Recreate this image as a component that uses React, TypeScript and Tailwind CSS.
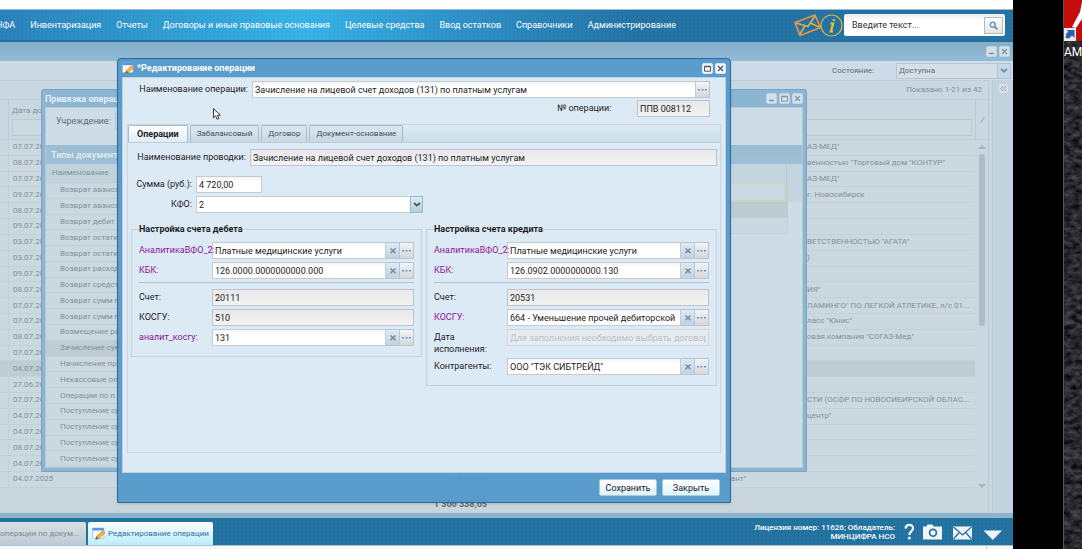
import type { ReactNode } from "react";
import { clsx } from "clsx";

const menu = [
  "НФА",
  "Инвентаризация",
  "Отчеты",
  "Договоры и иные правовые основания",
  "Целевые средства",
  "Ввод остатков",
  "Справочники",
  "Администрирование",
];

type Row = { date: string; text?: string; wide?: boolean; sum?: string; active?: boolean };

const rows: Row[] = [
  { date: "07.07.2025", text: 'АЗ-МЕД"' },
  { date: "08.07.2025", text: 'венностью "Торговый дом "КОНТУР"' },
  { date: "07.07.2025", text: 'АЗ-МЕД"' },
  { date: "09.07.2025", text: "г. Новосибирск" },
  { date: "08.07.2025" },
  { date: "09.07.2025" },
  { date: "03.07.2025", text: 'ВЕТСТВЕННОСТЬЮ "АГАТА"' },
  { date: "03.07.2025", text: ")" },
  { date: "09.07.2025" },
  { date: "08.07.2025", text: 'ИЯ"' },
  { date: "07.07.2025", text: 'ЛАМИНГО" ПО ЛЕГКОЙ АТЛЕТИКЕ, л/с 01...' },
  { date: "07.07.2025", text: 'ласс "Юнис"' },
  { date: "08.07.2025", text: 'овая компания "СОГАЗ-Мед"' },
  { date: "07.07.2025" },
  { date: "04.07.2025", active: true },
  { date: "27.06.2025" },
  { date: "07.07.2025", text: "СТИ (ОСФР ПО НОВОСИБИРСКОЙ ОБЛАС..." },
  { date: "04.07.2025", text: 'центр"' },
  { date: "04.07.2025" },
  { date: "08.07.2025" },
  { date: "04.07.2025" },
  { date: "04.07.2025", text: 'арант"', wide: true, sum: "10 500,00" },
];

const documentTypes = [
  "Возврат аванса",
  "Возврат аванса",
  "Возврат дебит",
  "Возврат остатк",
  "Возврат остатк",
  "Возврат расход",
  "Возврат средст",
  "Возврат сумм п",
  "Возврат сумм п",
  "Возмещение ра",
  "Зачисление сум",
  "Начисление пр",
  "Некассовые оп",
  "Операции по п",
  "Поступление ср",
  "Поступление ср",
  "Поступление ср",
  "Поступление су",
];

function EditIcon({ className }: { className?: string }) {
  return (
    <svg viewBox="0 0 12 12" className={clsx("shrink-0", className)} aria-hidden="true">
      <rect x="0.5" y="1" width="10.5" height="9.5" rx="0.8" fill="#f6faff" stroke="#9dbce0" strokeWidth="0.7" />
      <rect x="0.5" y="1" width="10.5" height="2.2" fill="#5b93da" />
      <path d="M3.4 11.4 4.2 8.6 9.4 3.8 11.6 5.9 6.2 10.8Z" fill="#f3b73c" stroke="#b98331" strokeWidth="0.5" />
      <path d="M3.4 11.4 4.2 8.6 6.2 10.8Z" fill="#7b5b3b" />
      <path d="m9.4 3.8 2.2 2.1.5-.6c.2-.9-1.2-2.2-2.1-2.1z" fill="#ee8a6d" />
    </svg>
  );
}

function ToolButton({ kind, faded }: { kind: "min" | "max" | "close" | "collapse"; faded?: boolean }) {
  return (
    <button
      type="button"
      aria-label={kind}
      className={clsx(
        "grid size-[11px] shrink-0 place-items-center rounded-[2px] border",
        faded ? "border-[#c4d3dd] bg-[#d5e0e8] text-[#8496a3]" : "border-[#d9e3ea] bg-[#f4f6f8] text-[#4b5a66]",
      )}
    >
      <svg viewBox="0 0 9 9" className="size-[9px]" fill="none" stroke="currentColor" aria-hidden="true">
        {kind === "min" && <path d="M2 6.5h5" strokeWidth="1.5" />}
        {kind === "max" && <path d="M1.5 2.2h6v5h-6zM1.5 2.8h6" strokeWidth="1" />}
        {kind === "close" && <path d="m2 2 5 5m0-5L2 7" strokeWidth="1.3" />}
        {kind === "collapse" && <path d="M4 2 1.8 4.5 4 7m3-5L4.8 4.5 7 7" strokeWidth="0.8" />}
      </svg>
    </button>
  );
}

function Trigger({ kind, label }: { kind: "clear" | "more"; label: string }) {
  return (
    <button
      type="button"
      aria-label={label}
      className={clsx(
        "grid w-[14px] shrink-0 place-items-center border border-l-0 border-[#b9c5d0]",
        kind === "clear" ? "bg-linear-to-b from-[#dcebf5] to-[#bfd3e2]" : "bg-linear-to-b from-[#f2f4f5] to-[#d4d8db]",
      )}
    >
      {kind === "clear" ? (
        <svg viewBox="0 0 8 8" className="size-2" stroke="#7b8d9b" strokeWidth="1.5" aria-hidden="true">
          <path d="m1.5 1.5 5 4.6m0-4.6-5 4.6" />
        </svg>
      ) : (
        <svg viewBox="0 0 9 3" className="h-[3px] w-[9px]" fill="#6f97bd" aria-hidden="true">
          <path d="M0 1h2v1.500H0zM3.500 1h2v1.500h-2zM7 1h2v1.500H7z" />
        </svg>
      )}
    </button>
  );
}

type FieldProps = {
  id: string;
  label: ReactNode;
  value?: string;
  placeholder?: string;
  labelClass?: string;
  boxClass?: string;
  readOnly?: boolean;
  disabled?: boolean;
  clear?: boolean;
  more?: boolean;
};

function Field({ id, label, value, placeholder, labelClass, boxClass, readOnly, disabled, clear, more }: FieldProps) {
  return (
    <div className="flex items-start">
      <label htmlFor={id} className={clsx("relative z-10 shrink-0 pt-[2px] leading-[12px] whitespace-nowrap", labelClass)}>
        {label}
      </label>
      <div className={clsx("flex h-[17px]", boxClass)}>
        <input
          id={id}
          defaultValue={value}
          placeholder={placeholder}
          readOnly={readOnly}
          disabled={disabled}
          className={clsx(
            "w-full min-w-0 flex-1 border px-[2px]",
            readOnly && "border-[#bfc3d0] bg-linear-to-b from-[#e8e8e8] to-[#f3f3f3]",
            disabled && "border-[#d0d6dc] bg-[#e7ecf0] placeholder:text-[#b9bfc5]",
            !readOnly && !disabled && "border-[#c3cbd3] bg-linear-to-b from-[#f4f4f4] to-white to-30%",
          )}
        />
        {clear && <Trigger kind="clear" label="Очистить" />}
        {more && <Trigger kind="more" label="Выбрать" />}
      </div>
    </div>
  );
}

function Header() {
  return (
    <header className="flex h-[33px] shrink-0 items-center border-t border-[#9db9cb] border-b-2 border-b-[#2a6f9b] bg-[radial-gradient(#0000000d_1px,transparent_1px),linear-gradient(90deg,#2a83bb_0%,#37b4e9_30%,#2f93cb_45%,#2474a6_63%)] bg-size-[4px_4px,100%_100%] pr-2 text-white">
      <nav className="flex flex-1 items-center gap-[15px] overflow-hidden whitespace-nowrap">
        {menu.map((item) => (
          <a key={item} href="#" className="first:-ml-1">
            {item}
          </a>
        ))}
      </nav>
      <svg viewBox="0 0 50 24" className="h-[24px] w-[50px] shrink-0" fill="none" aria-hidden="true">
        <g stroke="#e8924a" strokeWidth="1.7" strokeLinejoin="round">
          <path d="M1 9.500 21 2l5.500 12.500L6 22.500Z" />
          <path d="m2 10 12 3.500L21 3M6 21l5-8.400M25 14l-8-3.800" stroke="#dcae45" />
        </g>
        <circle cx="37.500" cy="12.500" r="10.500" stroke="#d9b23f" strokeWidth="1.2" />
        <path d="M36.500 10.500h2.600l-2.200 7.800h2M39.900 6.200v1.900" stroke="#ecc52e" strokeWidth="2.2" />
      </svg>
      <div className="flex h-[22px] w-[161px] shrink-0 items-center rounded-[2px] bg-linear-to-b from-[#ececec] to-white to-30% pr-[2px] pl-2">
        <input
          aria-label="Поиск"
          placeholder="Введите текст..."
          className="min-w-0 flex-1 text-[#333] outline-none placeholder:text-[#333]"
        />
        <button
          type="button"
          aria-label="Найти"
          className="grid h-[17px] w-[19px] place-items-center border border-[#b5b9bc] bg-linear-to-b from-white to-[#e3e3e3]"
        >
          <svg viewBox="0 0 9 9" className="size-[9px]" fill="none" stroke="#4d8fc0" aria-hidden="true">
            <circle cx="3.7" cy="3.7" r="2.5" strokeWidth="1.3" />
            <path d="m5.6 5.6 2.8 2.8" strokeWidth="1.7" />
          </svg>
        </button>
      </div>
    </header>
  );
}

function RegistryWindow() {
  return (
    <section className="flex min-h-0 flex-1 flex-col bg-[#c8d7e0] text-[8px] text-[#83919b]">
      <div className="flex h-[19px] shrink-0 items-center justify-end gap-[2px] bg-linear-to-b from-[#84afcb] to-[#92bbd7] pr-[3px]">
        <ToolButton kind="min" faded />
        <ToolButton kind="close" faded />
      </div>
      <div className="flex h-[19px] shrink-0 items-center justify-end bg-linear-to-r from-[#cbdae3] to-[#cddce9] pr-[2px] text-[#5d6b76]">
        <label htmlFor="state" className="w-[64px]">
          Состояние:
        </label>
        <div className="relative h-[16px] w-[115px]">
          <select id="state" className="h-full w-full appearance-none border border-[#b5c5d1] bg-[#d3dee6] px-[2px]">
            <option>Доступна</option>
          </select>
          <span className="pointer-events-none absolute inset-y-0 right-0 grid w-[14px] place-items-center border border-[#b0c5d4] bg-[#c4d8e6]">
            <svg viewBox="0 0 8 5" className="h-[5px] w-2" fill="none" stroke="#73889a" strokeWidth="1.8" aria-hidden="true">
              <path d="m1 1 3 2.6L7 1" />
            </svg>
          </span>
        </div>
      </div>
      <div className="flex min-h-0 flex-1">
        <div className="flex min-w-0 flex-1 flex-col border-r border-[#bccbd5]">
          <div className="flex h-[20px] shrink-0 items-center justify-end border-y border-[#bfced7] pr-[6px]">
            Показано 1-21 из 42
          </div>
          <div className="flex h-[40px] shrink-0 border-b border-[#bfcdd6]">
            <div className="w-[9px] border-r border-[#bccad3]" />
            <div className="flex flex-1 flex-col border-r border-[#bccad3] px-[3px] pt-[5px]">
              <span>Дата до</span>
              <span className="mt-[2px] h-[17px] border border-[#bac8d1] bg-[#cddae2]" />
            </div>
            <span className="w-[12px] pt-[14px] pl-[5px] italic">/</span>
          </div>
          <div className="flex min-h-0 flex-1">
            <div className="flex min-w-0 flex-1 flex-col bg-[#cbd8e0]">
              {rows.map((row, index) => (
                <div
                  key={index}
                  className={clsx(
                    "flex min-h-0 flex-1 items-center border-b border-[#c2d0d8] whitespace-nowrap",
                    row.active && "bg-[#bfccd4]",
                  )}
                >
                  <span className="h-full w-[9px] shrink-0 border-r border-[#c2d0d8]" />
                  <span className="w-[60px] shrink-0 pl-[4px]">{row.date}</span>
                  <span className="w-[419px] shrink-0 text-right">{row.sum}</span>
                  <span className={clsx("shrink-0", row.wide ? "pl-[234px]" : "pl-[319px]")}>{row.text}</span>
                </div>
              ))}
            </div>
            <div className="flex w-[13px] flex-col items-center pt-[5px]">
              <svg viewBox="0 0 8 4" className="h-1 w-2 shrink-0" fill="#a5b4be" aria-hidden="true">
                <path d="M0 4 4 0l4 4z" />
              </svg>
              <div className="mt-[5px] h-1/2 w-[6px] rounded-full bg-[#aebcc6]" />
              <svg viewBox="0 0 8 4" className="mt-auto h-1 w-2 shrink-0" fill="#a5b4be" aria-hidden="true">
                <path d="m0 0 4 4 4-4z" />
              </svg>
            </div>
          </div>
          <div className="flex h-[25px] shrink-0 items-end bg-[#c8d5dd] pb-[3px]">
            <strong className="w-[487px] text-right text-[9px] leading-[12px] text-[#5f6e79]">1 366 338,65</strong>
          </div>
        </div>
        <div className="ml-[3px] flex w-[21px] justify-center border-l border-[#bccbd5] bg-[#c2d3de] pt-[3px]">
          <ToolButton kind="collapse" faded />
        </div>
      </div>
    </section>
  );
}

function BindingWindow() {
  return (
    <section className="absolute top-[47px] right-[206px] bottom-[41px] left-[41px] flex flex-col rounded-t-[3px] border border-[#76a6c7] bg-[#8bb6d3] p-[3px] pt-0 text-[#83919b]">
      <div className="flex h-[17px] shrink-0 items-center gap-[2px] text-[#e6eff5]">
        <strong className="flex-1">Привязка операции</strong>
        <ToolButton kind="min" faded />
        <ToolButton kind="max" faded />
        <ToolButton kind="close" faded />
      </div>
      <div className="flex min-h-0 flex-1 flex-col border border-[#b9c8d3] bg-[#cedce7]">
        <div className="flex h-[37px] shrink-0 items-start pt-[5px] pl-[10px] text-[#5d6b76]">
          <label htmlFor="org" className="w-[59px] pt-[2px]">
            Учреждение:
          </label>
          <input id="org" className="h-[17px] w-[400px] border border-[#bccad4] bg-[#d4dfe6]" />
        </div>
        <h2 className="flex h-[19px] shrink-0 items-center bg-linear-to-b from-[#99bdd3] to-[#9fc0d6] pl-[5px] font-bold text-[#dce8f0]">
          Типы документов
        </h2>
        <div className="flex min-h-0 flex-1 text-[8px]">
          <div className="flex w-[300px] flex-col bg-[#cbd8e0]">
            <div className="flex h-[19px] shrink-0 items-center border-b border-[#bccbd5] bg-[#c2d2dc] pl-[6px]">
              Наименование
            </div>
            {documentTypes.map((name, index) => (
              <div
                key={index}
                className={clsx(
                  "flex min-h-0 flex-1 items-center border-b border-[#c3d0d9] pl-[14px]",
                  index === 10 && "bg-[#bfccd4]",
                )}
              >
                {name}
              </div>
            ))}
          </div>
          <div className="flex flex-1 flex-col">
            <div className="h-[38px] bg-[#c5d5df] pr-[15px]">
              <div className="h-full border-r border-[#b8c7d1] pt-[19px] pr-[1px]">
                <div className="h-[18px] border border-[#d3d79c] bg-[#cbd9e4]" />
              </div>
            </div>
            <div className="mr-[14px] h-[16px] bg-[#becbd3]" />
            <div className="mr-[14px] h-[16px] border-r border-b border-[#c2d0d9] bg-[#cbd8e0]" />
          </div>
        </div>
      </div>
    </section>
  );
}

const tabs = ["Операции", "Забалансовый", "Договор", "Документ-основание"];

const accountLabel = "w-[73px]";
const lookupLabel = "w-[73px] text-[#8f148f]";

function OperationDialog() {
  return (
    <section
      role="dialog"
      aria-label="Редактирование операции"
      className="absolute top-[16px] right-[282px] bottom-[10px] left-[117px] flex flex-col rounded-t-[4px] border border-[#2c6c9f] bg-[#5399c9]/95 px-[4px] shadow-sm"
    >
      <div className="flex h-[18px] shrink-0 items-center gap-[2px] text-white">
        <EditIcon className="size-[12px]" />
        <h1 className="ml-[1px] flex-1 font-bold">*Редактирование операции</h1>
        <ToolButton kind="max" />
        <ToolButton kind="close" />
      </div>
      <form className="flex min-h-0 flex-1 flex-col border border-[#bcd0de] bg-[#dceaf6] px-[4px] pb-[19px]">
        <div className="flex flex-col gap-[2px] pt-[3px] pr-[11px]">
          <Field
            id="operation"
            label="Наименование операции:"
            value="Зачисление на лицевой счет доходов (131) по платным услугам"
            labelClass="w-[125px] pr-[4px] text-right"
            boxClass="flex-1"
            more
          />
          <div className="flex justify-end">
            <Field id="number" label="№ операции:" value="ППВ 008112" labelClass="w-[80px]" boxClass="w-[73px]" readOnly />
          </div>
        </div>
        <div className="mt-[7px] flex min-h-0 flex-1 flex-col border border-[#cdd5da]">
          <div role="tablist" className="flex h-[18px] shrink-0 items-end gap-[2px] border-b border-[#c3ccd2] bg-linear-to-b from-[#deebf5] to-[#c9ddea]">
            {tabs.map((tab, index) => (
              <button
                key={tab}
                type="button"
                role="tab"
                aria-selected={index === 0}
                className={clsx(
                  "h-[17px] rounded-t-[2px] border border-b-0 border-[#a9bccb] bg-linear-to-b",
                  index === 0
                    ? "from-white to-[#dceef7] px-[8px] font-bold text-[#222]"
                    : "from-[#dbe7f0] to-[#c6d9e6] px-[6px] text-[8px] text-[#3f4b54]",
                )}
              >
                {tab}
              </button>
            ))}
          </div>
          <div className="flex-1 px-[3px] pt-[6px]">
            <Field
              id="posting"
              label="Наименование проводки:"
              value="Зачисление на лицевой счет доходов (131) по платным услугам"
              labelClass="w-[119px] pr-[4px] text-right"
              boxClass="flex-1"
              readOnly
            />
            <div className="mt-[10px] flex flex-col gap-[3px]">
              <Field id="amount" label="Сумма (руб.):" value="4 720,00" labelClass="w-[65px] pr-[4px] text-right" boxClass="w-[66px]" />
              <div className="flex items-start">
                <label htmlFor="kfo" className="w-[65px] pt-[2px] pr-[4px] text-right leading-[12px]">
                  КФО:
                </label>
                <div className="relative h-[17px] w-[227px]">
                  <select id="kfo" className="h-full w-full appearance-none border border-[#c3cbd3] bg-white px-[2px]">
                    <option>2</option>
                  </select>
                  <span className="pointer-events-none absolute inset-y-0 right-0 grid w-[13px] place-items-center border border-[#9fb9cc] bg-linear-to-b from-[#dcecf6] to-[#b4cee0]">
                    <svg viewBox="0 0 8 5" className="h-[5px] w-2" fill="none" stroke="#3f5768" strokeWidth="1.8" aria-hidden="true">
                      <path d="m1 1 3 2.6L7 1" />
                    </svg>
                  </span>
                </div>
              </div>
            </div>
            <div className="mt-[10px] grid grid-cols-2 items-start gap-[4px]">
              <fieldset className="min-w-0 border border-[#c9d1d6] px-[7px] pb-[10px]">
                <legend className="leading-[12px] font-bold">Настройка счета дебета</legend>
                <div className="mt-[7px] flex flex-col gap-[3px]">
                  <Field id="d-analytics" label="АналитикаВФО_2:" value="Платные медицинские услуги" labelClass={lookupLabel} boxClass="flex-1" clear more />
                  <Field id="d-kbk" label="КБК:" value="126.0000.0000000000.000" labelClass={lookupLabel} boxClass="flex-1" clear more />
                  <hr className="mb-[3px] border-[#b5c3d3]" />
                  <Field id="d-account" label="Счет:" value="20111" labelClass={accountLabel} boxClass="flex-1" readOnly />
                  <Field id="d-kosgu" label="КОСГУ:" value="510" labelClass={accountLabel} boxClass="flex-1" readOnly />
                  <Field id="d-extra" label="аналит_косгу:" value="131" labelClass={lookupLabel} boxClass="flex-1" clear more />
                </div>
              </fieldset>
              <fieldset className="min-w-0 border border-[#c9d1d6] px-[7px] pb-[10px]">
                <legend className="leading-[12px] font-bold">Настройка счета кредита</legend>
                <div className="mt-[7px] flex flex-col gap-[3px]">
                  <Field id="c-analytics" label="АналитикаВФО_2:" value="Платные медицинские услуги" labelClass={lookupLabel} boxClass="flex-1" clear more />
                  <Field id="c-kbk" label="КБК:" value="126.0902.0000000000.130" labelClass={lookupLabel} boxClass="flex-1" clear more />
                  <hr className="mb-[3px] border-[#b5c3d3]" />
                  <Field id="c-account" label="Счет:" value="20531" labelClass={accountLabel} boxClass="flex-1" readOnly />
                  <Field id="c-kosgu" label="КОСГУ:" value="664 - Уменьшение прочей дебиторской" labelClass={lookupLabel} boxClass="flex-1" clear more />
                  <Field
                    id="c-date"
                    label={
                      <>
                        Дата
                        <br />
                        исполнения:
                      </>
                    }
                    placeholder="Для заполнения необходимо выбрать договор"
                    labelClass={accountLabel}
                    boxClass="flex-1"
                    disabled
                  />
                  <Field id="c-partner" label="Контрагенты:" value={'ООО "ТЭК СИБТРЕЙД"'} labelClass={accountLabel} boxClass="flex-1" clear more />
                </div>
              </fieldset>
            </div>
          </div>
        </div>
      </form>
      <div className="flex h-[29px] shrink-0 items-center justify-end gap-[5px] pr-[6px] text-[#222]">
        {["Сохранить", "Закрыть"].map((name) => (
          <button
            key={name}
            type="button"
            className="h-[17px] w-[58px] rounded-[2px] border border-[#a9cbe0] bg-linear-to-b from-white to-[#dff3fb]"
          >
            {name}
          </button>
        ))}
      </div>
    </section>
  );
}

function Taskbar() {
  return (
    <footer className="flex h-[27px] shrink-0 items-center bg-[#2474a3] bg-[radial-gradient(#0000000f_1px,transparent_1px)] bg-size-[4px_4px] pr-[11px] text-[8px]">
      <div className="flex h-full flex-1 items-end gap-[2px] pt-[4px]">
        <button type="button" className="h-full w-[86px] rounded-tr-[2px] bg-linear-to-b from-[#d9dfe3] to-[#bccbd5] text-left whitespace-nowrap text-[#7f8c95]">
          операции по докум...
        </button>
        <button type="button" className="flex h-full items-center gap-[3px] rounded-t-[2px] bg-linear-to-b from-white to-[#b9ecfa] px-[4px] whitespace-nowrap text-[#2f6d9b]">
          <EditIcon className="size-[13px]" />
          Редактирование операции
        </button>
      </div>
      <p className="text-right leading-[9px] font-medium text-white">
        Лицензия номер: 11626; Обладатель:
        <br />
        МИНЦИФРА НСО
      </p>
      <svg viewBox="0 0 98 18" className="ml-[9px] h-[18px] w-[98px] shrink-0" aria-hidden="true">
        <path d="M1.5 5.6C1.8.8 9 .6 9 5.2 9 8.4 5.3 8.3 5.3 12" fill="none" stroke="#f1f4f6" strokeWidth="2.2" />
        <circle cx="5.3" cy="15" r="1.5" fill="#f1f4f6" />
        <path d="M19 3.500h3.500l1-2h5l1 2H38v13H19z" fill="#f1f4f6" />
        <circle cx="29" cy="9.800" r="3.400" fill="none" stroke="#2474a3" strokeWidth="1.7" />
        <path d="M49 3.500h19v13H49z" fill="#f1f4f6" />
        <path d="m49.500 4 9 8 9-8M49.500 16l5.800-6.500M67.500 16l-5.800-6.500" fill="none" stroke="#2474a3" strokeWidth="1.3" />
        <path d="M79.500 7.500H98L88.800 17z" fill="#f1f4f6" />
      </svg>
    </footer>
  );
}

function DesktopEdge() {
  return (
    <aside className="relative w-[19px] shrink-0 overflow-hidden border-l border-[#555] bg-[#25272c]">
      <svg className="absolute inset-0 h-full w-full" aria-hidden="true">
        <filter id="rock" colorInterpolationFilters="sRGB">
          <feTurbulence type="fractalNoise" baseFrequency="0.12 0.2" numOctaves="4" seed="7" />
          <feColorMatrix values="0.4 0 0 0 -0.04  0.4 0 0 0 -0.04  0.4 0 0 0 -0.02  0 0 0 0 1" />
        </filter>
        <rect width="100%" height="100%" filter="url(#rock)" />
      </svg>
      <svg viewBox="0 0 18 41" className="absolute top-0 left-0 h-[41px] w-[18px]" aria-hidden="true">
        <path d="M0 0h18v41H0z" fill="#c40d0c" />
        <path d="m18 2-2 10-8 15 4 1 6-9z" fill="#fff" />
        <path d="M0 28h12v13H0z" fill="#e9edf1" />
        <path d="m1.500 38 1-5 2-1-2-2h8v8l-2.500-2.500-3 3z" fill="#2f5ea8" />
      </svg>
      <span className="absolute top-[45px] left-0 text-[12px] leading-[14px] text-white">АМ</span>
    </aside>
  );
}

export default function App() {
  return (
    <div className="flex h-screen overflow-hidden bg-black font-['Roboto',sans-serif] text-[9px] leading-[12px] text-[#1c1c1c]">
      <main className="flex min-w-0 flex-1 flex-col bg-white pt-[9px]">
        <Header />
        <div className="relative flex min-h-0 flex-1 flex-col border-b-[5px] border-[#8bb4cf]">
          <RegistryWindow />
          <BindingWindow />
          <OperationDialog />
          <svg viewBox="0 0 8 12" className="absolute top-[66px] left-[213px] h-3 w-2" aria-hidden="true">
            <path d="M.5.5v9.300l2.200-2 1.500 3.500 1.700-.8-1.500-3.300h3z" fill="#fff" stroke="#222" strokeWidth="0.9" />
          </svg>
        </div>
        <Taskbar />
        <div className="flex h-[4px] shrink-0 justify-end border-t border-[#a9c3d4] bg-[#f8f8f8]">
          <span className="w-[27px] border-l border-[#c9c9c9]" />
        </div>
      </main>
      <div className="w-[50px] shrink-0 bg-black" />
      <DesktopEdge />
    </div>
  );
}
